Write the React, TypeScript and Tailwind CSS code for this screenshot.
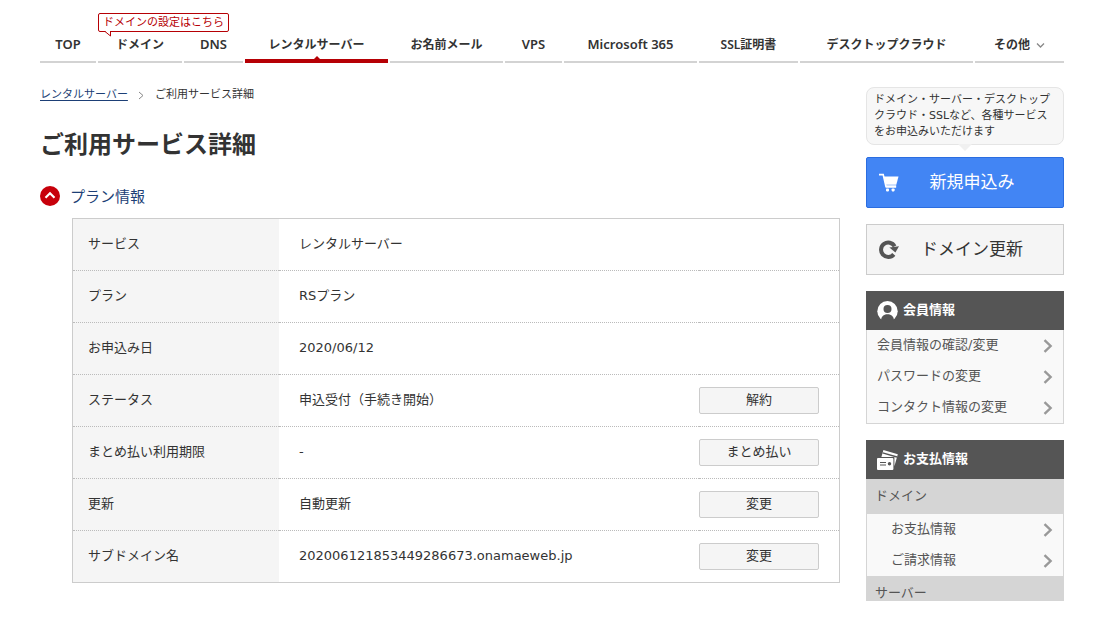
import type { ReactNode } from "react";
import clsx from "clsx";

interface NavItem {
  label: string;
  active?: boolean;
  latin?: boolean;
  balloon?: string;
  more?: boolean;
}

interface PlanRow {
  label: string;
  value: string;
  action?: string;
}

const NAV_ITEMS: NavItem[] = [
  { label: "TOP", latin: true },
  { label: "ドメイン", balloon: "ドメインの設定はこちら" },
  { label: "DNS", latin: true },
  { label: "レンタルサーバー", active: true },
  { label: "お名前メール" },
  { label: "VPS", latin: true },
  { label: "Microsoft 365", latin: true },
  { label: "SSL証明書" },
  { label: "デスクトップクラウド" },
  { label: "その他", more: true },
];

const PLAN_ROWS: PlanRow[] = [
  { label: "サービス", value: "レンタルサーバー" },
  { label: "プラン", value: "RSプラン" },
  { label: "お申込み日", value: "2020/06/12" },
  { label: "ステータス", value: "申込受付（手続き開始）", action: "解約" },
  { label: "まとめ払い利用期限", value: "-", action: "まとめ払い" },
  { label: "更新", value: "自動更新", action: "変更" },
  {
    label: "サブドメイン名",
    value: "202006121853449286673.onamaeweb.jp",
    action: "変更",
  },
];

const MEMBER_LINKS = ["会員情報の確認/変更", "パスワードの変更", "コンタクト情報の変更"];
const PAYMENT_LINKS = ["お支払情報", "ご請求情報"];

function CartIcon() {
  return (
    <svg width="20" height="20" viewBox="0 0 20 20" fill="none" aria-hidden="true">
      <path d="M0 1.6h4.2l2.8 12.2h10" stroke="#fff" strokeWidth="1.6" />
      <path d="M4.5 3.4h15l-2.2 8.4H6.4z" fill="#fff" />
      <path d="M6.6 12.2h10.6v2.2H7z" fill="#fff" />
      <rect x="7" y="15.4" width="3" height="3" rx=".8" fill="#fff" />
      <rect x="12.6" y="15.4" width="3" height="3" rx=".8" fill="#fff" />
    </svg>
  );
}

function RefreshIcon() {
  return (
    <svg width="20" height="20" viewBox="0 0 20 20" fill="none" aria-hidden="true">
      <path d="M14.8 14.4A7.2 7.2 0 1 1 15.6 6.400" stroke="#555" strokeWidth="4" />
      <path d="M10.400 7.600L20 6.200l-3.600 6.400z" fill="#555" />
    </svg>
  );
}

function MemberIcon() {
  return (
    <svg width="21" height="20" viewBox="0 0 21 20" aria-hidden="true">
      <circle cx="10.5" cy="10.3" r="10.2" fill="#fff" />
      <circle cx="10.5" cy="8" r="4" fill="#555" />
      <path d="M4 20c0-4.600 2.500-6.800 6.500-6.800S17 15.400 17 20z" fill="#555" />
    </svg>
  );
}

function CardsIcon() {
  return (
    <svg width="21" height="20" viewBox="0 0 21 20" aria-hidden="true">
      <path d="M6.400 0L20.800 4.200 17.400 16.200V7H4.400z" fill="#fff" />
      <path d="M5.600 2.800L20 7" stroke="#555" strokeWidth="1.400" />
      <rect x="0" y="8" width="16.400" height="12" rx="1" fill="#fff" />
      <path d="M3 12.500h6M3 15h6" stroke="#555" strokeWidth="1" />
      <circle cx="12.500" cy="13.800" r="1.700" fill="#555" />
    </svg>
  );
}

function ArrowIcon() {
  return (
    <svg width="10" height="14" viewBox="0 0 10 14" fill="none" aria-hidden="true">
      <path d="M1.5 1.2L7.6 7l-6.1 5.8" stroke="#999" strokeWidth="2.4" />
    </svg>
  );
}

function GlobalNav() {
  return (
    <nav className="pt-[27px] font-['Noto_Sans','Noto_Sans_CJK_JP',sans-serif]">
      <ul className="grid grid-cols-[56fr_84fr_59fr_143fr_113fr_57fr_133fr_99fr_173fr_89fr] gap-x-0.5">
        {NAV_ITEMS.map(({ label, active, latin, balloon, more }) => (
          <li key={label} className="relative">
            <a
              href="#"
              className={clsx(
                "flex h-9 justify-center leading-5 font-semibold whitespace-nowrap",
                latin ? "pt-[7px] text-[13px]" : "pt-2 text-[12px]",
                active ? "border-b-4 border-[#b60005]" : "border-b-2 border-[#d3d3d3]",
              )}
            >
              {label}
              {more && (
                <svg className="mt-1.5 ml-1.5" width="9" height="9" viewBox="0 0 9 9" fill="none" aria-hidden="true">
                  <path d="M1 2.5l3.5 3.5L8 2.5" stroke="#888" strokeWidth="1.3" />
                </svg>
              )}
            </a>
            {active && (
              <svg className="absolute bottom-1 left-1/2 -translate-x-1/2" width="6" height="3" viewBox="0 0 6 3" aria-hidden="true">
                <path d="M0 3L3 0l3 3z" fill="#b60005" />
              </svg>
            )}
            {balloon && (
              <span className="absolute -top-3.5 left-0 z-10 rounded-xs border border-[#b60005] bg-white px-1 pb-px text-[11px] leading-4 whitespace-nowrap text-[#b60005]">
                {balloon}
                <svg className="absolute top-full left-1.5" width="6" height="6" viewBox="0 0 6 6" aria-hidden="true">
                  <path d="M0 0h6v5z" fill="#fff" />
                  <path d="M0 .5L5.5 5V0" fill="none" stroke="#b60005" />
                </svg>
              </span>
            )}
          </li>
        ))}
      </ul>
    </nav>
  );
}

function PlanTable() {
  return (
    <table className="ml-8 w-[calc(100%-32px)] border-separate border-spacing-0 border border-[#ccc] text-[13px] leading-5">
      <tbody>
        {PLAN_ROWS.map(({ label, value, action }) => (
          <tr key={label} className="group h-13 last:h-[51px]">
            <th
              scope="row"
              className="w-[206px] border-b border-dotted border-[#bbb] bg-[#f5f5f5] pb-0.5 pl-[15px] text-left font-normal group-last:border-b-0"
            >
              {label}
            </th>
            <td className="border-b border-dotted border-[#bbb] pb-0.5 pl-5 group-last:border-b-0">
              {value}
            </td>
            <td className="w-[140px] border-b border-dotted border-[#bbb] pr-5 group-last:border-b-0">
              {action && (
                <button
                  type="button"
                  className="block h-[27px] w-full rounded-xs border border-[#ccc] bg-[#f5f5f5] pb-0.5"
                >
                  {action}
                </button>
              )}
            </td>
          </tr>
        ))}
      </tbody>
    </table>
  );
}

function SideHeading({ icon, children }: { icon: ReactNode; children: ReactNode }) {
  return (
    <h2 className="flex h-[39px] items-center gap-[5px] bg-[#555] pl-[11px] text-[13px] leading-5 font-bold text-white">
      {icon}
      <span className="pb-0.5">{children}</span>
    </h2>
  );
}

function SideLinks({ links, indent }: { links: string[]; indent?: boolean }) {
  return (
    <ul className="border-x border-[#d5d5d5] bg-[#f9f9f9]">
      {links.map((link) => (
        <li key={link}>
          <a
            href="#"
            className={clsx(
              "flex h-[31px] items-center justify-between pr-2.5 text-[13px] leading-5 text-[#555]",
              indent ? "pl-6" : "pl-2.5",
            )}
          >
            <span className="pb-0.5">{link}</span>
            <ArrowIcon />
          </a>
        </li>
      ))}
    </ul>
  );
}

function Sidebar() {
  return (
    <aside className="w-[198px] shrink-0 pt-6">
      <p className="relative rounded-lg border border-[#e5e5e5] bg-[#f7f7f7] py-1 pl-[7px] text-[11px] leading-4 whitespace-nowrap">
        ドメイン・サーバー・デスクトップ
        <br />
        クラウド・SSLなど、各種サービス
        <br />
        をお申込みいただけます
        <svg className="absolute top-full left-1/2 -translate-x-1/2" width="14" height="7" viewBox="0 0 14 7" aria-hidden="true">
          <path d="M0 0l7 7 7-7z" fill="#f0f0f0" />
        </svg>
      </p>
      <button
        type="button"
        className="mt-3 flex h-[51px] w-full items-center rounded-xs border border-[#2b6de0] bg-[#4285f4] pl-3 text-[17px] text-white"
      >
        <CartIcon />
        <span className="flex-1 pr-[18px]">新規申込み</span>
      </button>
      <button
        type="button"
        className="mt-4 mb-4 flex h-[51px] w-full items-center border border-[#ccc] bg-[#f5f5f5] pl-3 text-[17px]"
      >
        <RefreshIcon />
        <span className="flex-1 pr-[18px]">ドメイン更新</span>
      </button>

      <section className="mb-4 border-b border-[#d5d5d5]">
        <SideHeading icon={<MemberIcon />}>会員情報</SideHeading>
        <SideLinks links={MEMBER_LINKS} />
      </section>

      <section>
        <SideHeading icon={<CardsIcon />}>お支払情報</SideHeading>
        <h3 className="h-[35px] bg-[#d5d5d5] pt-[7px] pl-[9px] text-[13px] leading-5 text-[#555]">
          ドメイン
        </h3>
        <SideLinks links={PAYMENT_LINKS} indent />
        <h3 className="h-[25px] overflow-hidden bg-[#d5d5d5] pt-[7px] pl-[9px] text-[13px] leading-5 text-[#555]">
          サーバー
        </h3>
      </section>
    </aside>
  );
}

export default function App() {
  return (
    <div className="min-h-screen bg-white pr-9 pb-7 pl-10 font-['DejaVu_Sans','Noto_Sans_CJK_JP',sans-serif] text-[#333]">
      <GlobalNav />
      <div className="flex gap-[26px]">
        <main className="min-w-0 flex-1 pt-[22px]">
          <ol className="flex items-center gap-2.5 text-[11px] leading-5">
            <li>
              <a href="#" className="text-[#1d3f76] underline underline-offset-2">
                レンタルサーバー
              </a>
            </li>
            <li className="flex items-center gap-2.5">
              <svg width="7" height="9" viewBox="0 0 7 9" fill="none" aria-hidden="true">
                <path d="M1 1l4 3.5L1 8" stroke="#888" />
              </svg>
              ご利用サービス詳細
            </li>
          </ol>
          <h1 className="pt-6 text-[24px] leading-8 font-bold">ご利用サービス詳細</h1>
          <h2 className="pt-6 pb-[11px]">
            <button type="button" className="flex items-center gap-2.5 text-[15px] leading-5 text-[#1d3f76]">
              <svg width="20" height="20" viewBox="0 0 20 20" fill="none" aria-hidden="true">
                <circle cx="10" cy="10" r="10" fill="#c7000b" />
                <path d="M5.5 11.8L10 7.3l4.5 4.5" stroke="#fff" strokeWidth="2.2" />
              </svg>
              <span className="pt-0.5">プラン情報</span>
            </button>
          </h2>
          <PlanTable />
        </main>
        <Sidebar />
      </div>
    </div>
  );
}
